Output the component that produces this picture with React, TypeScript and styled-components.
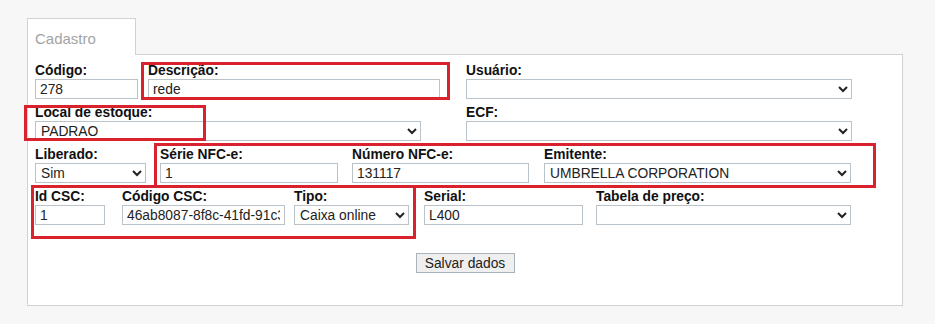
import React from "react";
import styled, { createGlobalStyle } from "styled-components";

const GlobalStyle = createGlobalStyle`
  html, body {
    margin: 0;
    padding: 0;
    background: #f7f7f7;
    font-family: "Liberation Sans", Arial, sans-serif;
  }
`;

const Page = styled.div`
  width: 935px;
  height: 324px;
  padding: 18px 0 0 27px;
  box-sizing: border-box;
`;

const Tab = styled.div`
  width: 109px;
  height: 37px;
  box-sizing: border-box;
  background: #fff;
  border: 1px solid #d2d2d2;
  border-bottom: none;
  padding: 11px 0 0 7px;
  font-size: 15px;
  color: #a3a3a3;
  position: relative;
  z-index: 1;
`;

const Panel = styled.div`
  position: relative;
  width: 876px;
  height: 252px;
  box-sizing: border-box;
  margin-top: -1px;
  background: #fff;
  border: 1px solid #d2d2d2;
  padding: 8px 0 0 7px;
`;

const Row = styled.div`
  display: flex;
  margin-bottom: 6px;
`;

const Field = styled.div<{ $slot?: number }>`
  display: flex;
  flex-direction: column;
  width: ${(p) => (p.$slot ? `${p.$slot}px` : "auto")};
  flex-shrink: 0;
`;

const Label = styled.label`
  font-size: 13.8px;
  font-weight: bold;
  color: #111;
  line-height: 15px;
  margin-bottom: 1px;
`;

const Input = styled.input<{ $w: number }>`
  width: ${(p) => p.$w}px;
  height: 20px;
  box-sizing: border-box;
  border: 1px solid #b9c3c9;
  padding: 0 4px;
  font-family: "Liberation Sans", Arial, sans-serif;
  font-size: 13.8px;
  color: #222;
  background: #fff;
  outline: none;
`;

const Select = styled.select<{ $w: number }>`
  width: ${(p) => p.$w}px;
  height: 20px;
  box-sizing: border-box;
  border: 1px solid #b9c3c9;
  border-radius: 0;
  padding: 0 0 0 1px;
  font-family: "Liberation Sans", Arial, sans-serif;
  font-size: 13.8px;
  color: #222;
  background: #fff;
  outline: none;
`;

const Actions = styled.div`
  display: flex;
  justify-content: center;
  margin-top: 28px;
  padding-right: 7px;
`;

const Button = styled.button`
  width: 99px;
  height: 20px;
  box-sizing: border-box;
  border: 1px solid #aab3ba;
  background: #efefef;
  font-family: "Liberation Sans", Arial, sans-serif;
  font-size: 13.8px;
  color: #222;
  padding: 0;
`;

const Mark = styled.div<{ $x: number; $y: number; $w: number; $h: number }>`
  position: absolute;
  left: ${(p) => p.$x}px;
  top: ${(p) => p.$y}px;
  width: ${(p) => p.$w}px;
  height: ${(p) => p.$h}px;
  box-sizing: border-box;
  border: 3px solid #d8232f;
  pointer-events: none;
`;

export default function App() {
  return (
    <Page>
      <GlobalStyle />
      <Tab>Cadastro</Tab>
      <Panel>
        <Row>
          <Field $slot={113}>
            <Label>Código:</Label>
            <Input $w={103} defaultValue="278" />
          </Field>
          <Field $slot={318}>
            <Label>Descrição:</Label>
            <Input $w={292} defaultValue="rede" />
          </Field>
          <Field>
            <Label>Usuário:</Label>
            <Select $w={386} defaultValue="">
              <option value=""></option>
            </Select>
          </Field>
        </Row>
        <Row>
          <Field $slot={431}>
            <Label>Local de estoque:</Label>
            <Select $w={386} defaultValue="padrao">
              <option value="padrao">PADRAO</option>
            </Select>
          </Field>
          <Field>
            <Label>ECF:</Label>
            <Select $w={386} defaultValue="">
              <option value=""></option>
            </Select>
          </Field>
        </Row>
        <Row>
          <Field $slot={125}>
            <Label>Liberado:</Label>
            <Select $w={111} defaultValue="sim">
              <option value="sim">Sim</option>
              <option value="nao">Não</option>
            </Select>
          </Field>
          <Field $slot={192}>
            <Label>Série NFC-e:</Label>
            <Input $w={178} defaultValue="1" />
          </Field>
          <Field $slot={192}>
            <Label>Número NFC-e:</Label>
            <Input $w={177} defaultValue="131117" />
          </Field>
          <Field>
            <Label>Emitente:</Label>
            <Select $w={307} defaultValue="umbrella">
              <option value="umbrella">UMBRELLA CORPORATION</option>
            </Select>
          </Field>
        </Row>
        <Row>
          <Field $slot={87}>
            <Label>Id CSC:</Label>
            <Input $w={70} defaultValue="1" />
          </Field>
          <Field $slot={172}>
            <Label>Código CSC:</Label>
            <Input $w={163} defaultValue="46ab8087-8f8c-41fd-91c3-7e5a0b2d4f18" />
          </Field>
          <Field $slot={130}>
            <Label>Tipo:</Label>
            <Select $w={115} defaultValue="online">
              <option value="online">Caixa online</option>
            </Select>
          </Field>
          <Field $slot={172}>
            <Label>Serial:</Label>
            <Input $w={159} defaultValue="L400" />
          </Field>
          <Field>
            <Label>Tabela de preço:</Label>
            <Select $w={255} defaultValue="">
              <option value=""></option>
            </Select>
          </Field>
        </Row>
        <Actions>
          <Button type="button">Salvar dados</Button>
        </Actions>

        <Mark $x={113} $y={7} $w={309} $h={38} />
        <Mark $x={-4} $y={50} $w={182} $h={36} />
        <Mark $x={126} $y={88} $w={722} $h={45} />
        <Mark $x={3} $y={130} $w={385} $h={54} />
      </Panel>
    </Page>
  );
}
